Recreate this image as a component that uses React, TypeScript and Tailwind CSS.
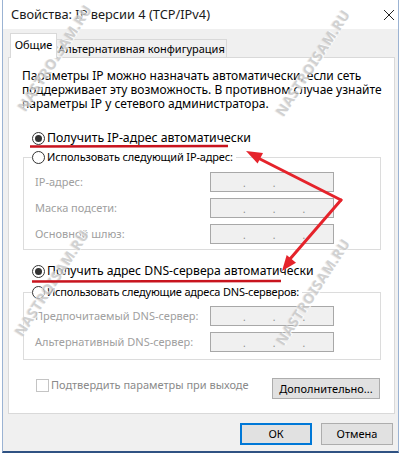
import React from 'react'

const Radio = ({ checked }: { checked?: boolean }) => (
  <span className="w-[13px] h-[13px] rounded-full border border-[#333333] bg-white flex items-center justify-center shrink-0">
    {checked && <span className="w-[7px] h-[7px] rounded-full bg-[#333333]" />}
  </span>
)

const IpField = ({ dots = 3 }: { dots?: number }) => (
  <div className="w-[124px] h-[20px] bg-[#f0f0f0] border border-[#a8a8a8] flex items-end pb-[3px] pl-[32px] gap-[27px] text-[10px] leading-none text-[#8c8c8c]">
    <span>.</span>
    <span>.</span>
    <span className={dots < 3 ? 'invisible' : ''}>.</span>
  </div>
)

const FieldRow = ({ label, dots }: { label: string; dots?: number }) => (
  <div className="flex items-center h-[20px]">
    <span className="w-[178px] pl-[3px] text-[#a0a0a0] whitespace-nowrap">{label}</span>
    <IpField dots={dots} />
  </div>
)

const Watermark = ({ className }: { className: string }) => (
  <span
    className={
      'absolute w-[130px] text-center text-[14px] leading-[18px] font-bold tracking-[0.5px] text-[#c6c6c6] opacity-80 -rotate-[57deg] whitespace-nowrap [text-shadow:1px_1px_0_#ffffff,-1px_-1px_0_#e8e8e8] ' +
      className
    }
  >
    NASTROISAM.RU
  </span>
)

export default function App() {
  return (
    <div className="w-[401px] h-[454px] bg-white relative overflow-hidden flex font-['Noto_Sans',sans-serif] text-[11px] leading-[14px] text-black">
      {/* window */}
      <div className="ml-[2px] w-[397px] h-[453px] border-l border-r border-b-2 border-l-[#9bb3d3] border-r-[#9bb3d3] border-b-[#2f5283] flex flex-col">
        {/* title bar */}
        <div className="h-[29px] bg-white flex items-center justify-between pl-[8px] pr-[3px] shrink-0">
          <span className="text-[12.8px] leading-none text-[#1a1a1a]">Свойства: IP версии 4 (TCP/IPv4)</span>
          <svg width="26" height="20" viewBox="0 0 26 20">
            <path d="M15 5 L25 15 M25 5 L15 15" stroke="#222" strokeWidth="1" fill="none" />
          </svg>
        </div>

        {/* body */}
        <div className="flex-1 bg-[#f0f0f0] pl-[5px] pr-[3px] flex flex-col">
          {/* tabs */}
          <div className="h-[28px] pt-[4px] flex items-end pl-[2px] shrink-0">
            <div className="w-[47px] h-[25px] bg-white border border-[#d9d9d9] border-b-0 -mb-px relative z-10 flex items-center justify-center pb-[2px]">
              Общие
            </div>
            <div className="w-[170px] h-[18px] bg-[#f0f0f0] border border-[#d9d9d9] border-l-0 border-b-0 flex items-center justify-center whitespace-nowrap">
              Альтернативная конфигурация
            </div>
          </div>

          {/* panel */}
          <div className="h-[357px] bg-white border border-[#d9d9d9] flex flex-col shrink-0">
            <p className="pt-[11px] pl-[13px] pr-[4px] whitespace-nowrap text-[12px]">
              Параметры IP можно назначать автоматически, если сеть
              <br />
              поддерживает эту возможность. В противном случае узнайте
              <br />
              параметры IP у сетевого администратора.
            </p>

            <div className="mt-[20px] pl-[23px] flex items-center gap-[2px] h-[14px] text-[12.3px]">
              <Radio checked />
              <span>Получить IP-адрес автоматически</span>
            </div>

            <fieldset className="mt-[5px] ml-[14px] w-[358px] border border-[#dcdcdc] px-[8px] pt-[8px] pb-[5px] flex flex-col gap-[6px]">
              <legend className="flex items-center gap-[2px] h-[14px] pr-[3px] tracking-[-0.15px]">
                <Radio />
                <span>Использовать следующий IP-адрес:</span>
              </legend>
              <FieldRow label="IP-адрес:" dots={2} />
              <FieldRow label="Маска подсети:" />
              <FieldRow label="Основной шлюз:" />
            </fieldset>

            <div className="mt-[14px] pl-[23px] flex items-center gap-[2px] h-[14px] text-[12.2px]">
              <Radio checked />
              <span>Получить адрес DNS-сервера автоматически</span>
            </div>

            <fieldset className="mt-[7px] ml-[14px] w-[358px] border border-[#dcdcdc] px-[8px] pt-[7px] pb-[7px] flex flex-col gap-[6px]">
              <legend className="flex items-center gap-[2px] h-[14px] pr-[3px] tracking-[-0.2px]">
                <Radio />
                <span>Использовать следующие адреса DNS-серверов:</span>
              </legend>
              <FieldRow label="Предпочитаемый DNS-сервер:" />
              <FieldRow label="Альтернативный DNS-сервер:" />
            </fieldset>

            <div className="mt-[18px] pl-[27px] pr-[14px] flex items-start justify-between">
              <div className="flex items-center gap-[2px] h-[14px] text-[#8a8a8a]">
                <span className="w-[13px] h-[13px] border border-[#c4c4c4] bg-white shrink-0" />
                <span>Подтвердить параметры при выходе</span>
              </div>
              <button className="w-[108px] h-[21px] bg-[#e1e1e1] border border-[#adadad] flex items-center justify-center">
                Дополнительно...
              </button>
            </div>
          </div>

          {/* buttons */}
          <div className="mt-[9px] flex justify-end gap-[9px] pr-[2px]">
            <button className="w-[72px] h-[22px] bg-[#e1e1e1] border-2 border-[#0078d7] flex items-center justify-center">
              ОК
            </button>
            <button className="w-[72px] h-[22px] bg-[#e1e1e1] border border-[#adadad] flex items-center justify-center">
              Отмена
            </button>
          </div>
        </div>
      </div>

      {/* watermarks */}
      <Watermark className="left-[-10px] top-[49px]" />
      <Watermark className="left-[248px] top-[54px]" />
      <Watermark className="left-[-13px] top-[274px]" />
      <Watermark className="left-[248px] top-[283px]" />

      {/* red annotations */}
      <svg className="absolute inset-0 pointer-events-none" width="401" height="454" viewBox="0 0 401 454">
        <path d="M30 146.5 L228 146" stroke="#c8141e" strokeWidth="2.5" />
        <path d="M32 281.5 L281 281" stroke="#c8141e" strokeWidth="2.5" />
        <path d="M341 200 L258 158" stroke="#e5232b" strokeWidth="3" strokeLinecap="round" />
        <polygon points="246,151 263,152.9 257.6,163.6" fill="#e5232b" />
        <path d="M341 200 L290 259" stroke="#e5232b" strokeWidth="3" strokeLinecap="round" />
        <polygon points="282,271 296,262.7 286.7,254.9" fill="#e5232b" />
      </svg>
    </div>
  )
}
